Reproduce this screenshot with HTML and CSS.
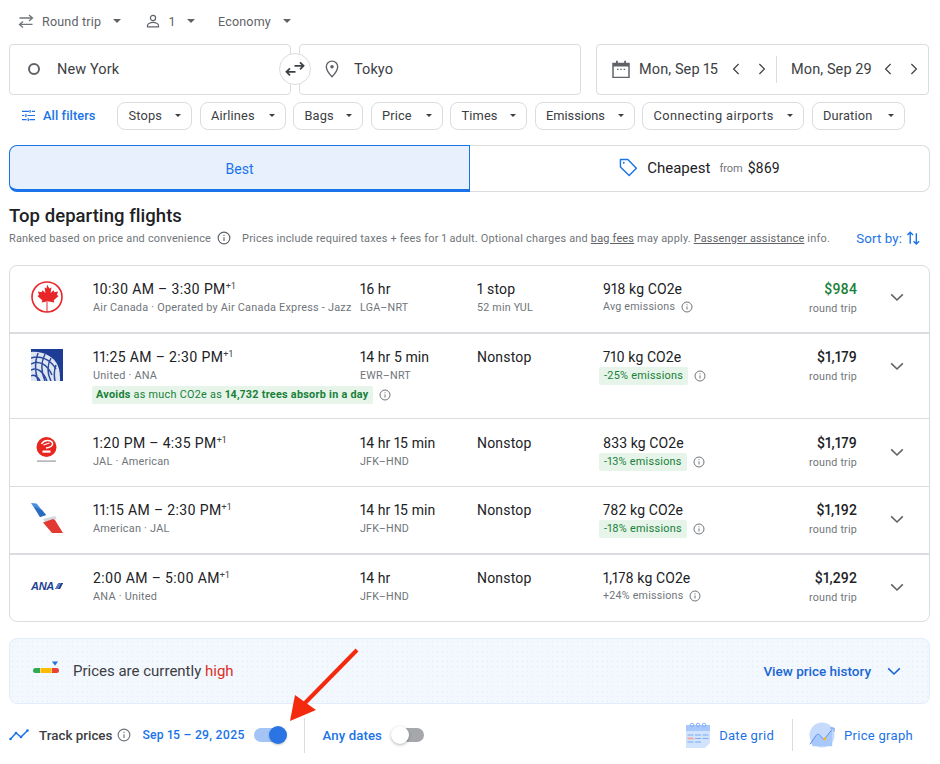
FILE: index.html
```html
<!DOCTYPE html>
<html lang="en">
<head>
<meta charset="utf-8">
<title>Flights</title>
<link rel="stylesheet" href="styles.css">
</head>
<body>
<svg class="defs" width="0" height="0" aria-hidden="true">
  <symbol id="info" viewBox="0 0 12 12"><circle cx="6" cy="6" r="5" fill="none" stroke="currentColor" stroke-width="1"/><path d="M6 5.400v3.100M6 3.300v1" stroke="currentColor" stroke-width="1" fill="none"/></symbol>
  <symbol id="chev" viewBox="0 0 14 9"><path d="M1.200 1.400 7 7l5.800-5.600" fill="none" stroke="currentColor" stroke-width="1.600"/></symbol>
  <symbol id="left" viewBox="0 0 8 12"><path d="M6.600 1 1.600 6l5 5" fill="none" stroke="currentColor" stroke-width="1.200"/></symbol>
  <symbol id="right" viewBox="0 0 8 12"><path d="M1.400 1l5 5-5 5" fill="none" stroke="currentColor" stroke-width="1.200"/></symbol>
</svg>

<div class="page">
  <div class="trip">
    <div class="trip-item trip-round">
      <svg class="ic16" viewBox="0 0 16 14"><path d="M11 1l3.500 3L11 7M14.500 4H1.500M5 7.400l-3.500 3L5 13.400M1.500 10.400h13" fill="none" stroke="#70757a" stroke-width="1.300"/></svg>
      <span>Round trip</span><i class="caret"></i>
    </div>
    <div class="trip-item trip-pax">
      <svg class="ic16" viewBox="0 0 14 14"><circle cx="7" cy="4" r="2.600" fill="none" stroke="#5f6368" stroke-width="1.200"/><path d="M1.500 12.800v-1.500c0-1.700 3-3 5.500-3s5.500 1.300 5.500 3v1.500z" fill="none" stroke="#5f6368" stroke-width="1.200"/></svg>
      <span>1</span><i class="caret"></i>
    </div>
    <div class="trip-item trip-class"><span>Economy</span><i class="caret"></i></div>
  </div>

  <div class="search">
    <div class="places">
      <div class="field field-from"><i class="ring"></i><span>New York</span></div>
      <div class="field field-to">
        <svg class="pin" viewBox="0 0 14 18"><path d="M7 1.100a5.700 5.700 0 0 0-5.700 5.700c0 4 5.700 10 5.700 10s5.700-6 5.700-10A5.700 5.700 0 0 0 7 1.100z" fill="none" stroke="#5f6368" stroke-width="1.400"/><circle cx="7" cy="6.800" r="1.800" fill="#5f6368"/></svg>
        <span>Tokyo</span>
      </div>
      <div class="swap">
        <svg viewBox="0 0 20 16" width="20" height="16"><path d="M9.500 4.800h9M15 1.300l3.600 3.500-3.600 3.500" fill="none" stroke="#3c4043" stroke-width="1.700"/><path d="M10.500 10.800h-9M5 7.300l-3.600 3.500L5 14.300" fill="none" stroke="#3c4043" stroke-width="1.700"/></svg>
      </div>
    </div>
    <div class="dates">
      <svg class="cal" viewBox="0 0 18 18"><path d="M1 3.500h16V17.500H1z" fill="none" stroke="#5f6368" stroke-width="1.500"/><path d="M1 3h16v3.500H1zM4 .8h1.800V3H4zM12.200.8H14V3h-1.800z" fill="#5f6368"/><path d="M5 9.300h1.500M8.300 9.300h1.500M11.600 9.300h1.500" stroke="#5f6368" stroke-width="1.200"/></svg>
      <span class="date">Mon, Sep 15</span>
      <svg class="nav nav-l"><use href="#left"/></svg>
      <svg class="nav nav-r"><use href="#right"/></svg>
      <i class="date-sep"></i>
      <span class="date">Mon, Sep 29</span>
      <svg class="nav nav-l"><use href="#left"/></svg>
      <svg class="nav nav-r"><use href="#right"/></svg>
    </div>
  </div>

  <div class="filters">
    <div class="all-filters">
      <svg viewBox="0 0 14 14" width="13" height="13"><path d="M0 2.500h7.500M10.500 2.500H14M0 7h2.500M6 7h8M0 11.500h5M8 11.500h6M8.700 1v3M4.200 5.500v3M6.700 10v3" fill="none" stroke="#1a73e8" stroke-width="1.300"/></svg>
      <span>All filters</span>
    </div>
    <div class="chip chip-stops">Stops<i class="caret"></i></div>
    <div class="chip chip-airlines">Airlines<i class="caret"></i></div>
    <div class="chip chip-bags">Bags<i class="caret"></i></div>
    <div class="chip chip-price">Price<i class="caret"></i></div>
    <div class="chip chip-times">Times<i class="caret"></i></div>
    <div class="chip chip-emissions">Emissions<i class="caret"></i></div>
    <div class="chip chip-connecting">Connecting airports<i class="caret"></i></div>
    <div class="chip chip-duration">Duration<i class="caret"></i></div>
  </div>

  <div class="tabs">
    <div class="tab tab-best">Best</div>
    <div class="tab tab-cheap">
      <svg class="tag" viewBox="0 0 20 20" width="19" height="19"><path d="M1.500 1.500h7.800l9 9.200-7.600 7.800-9.200-9z" fill="none" stroke="#1a73e8" stroke-width="1.500" stroke-linejoin="round"/><circle cx="5" cy="5" r="1" fill="#1a73e8"/></svg>
      <span class="cheap-label">Cheapest</span><span class="cheap-from">from</span><span class="cheap-price">$869</span>
    </div>
  </div>

  <h2 class="title">Top departing flights</h2>
  <div class="meta">
    <p class="meta-text">Ranked based on price and convenience<svg class="info info-meta"><use href="#info"/></svg><span class="meta-gap">Prices include required taxes + fees for 1 adult. Optional charges and <u>bag fees</u> may apply. <u>Passenger assistance</u> info.</span></p>
    <div class="sort">Sort by:<svg viewBox="0 0 16 16" width="15" height="16"><path d="M4.500 14V2M1.500 4.800 4.500 1.800l3 3" fill="none" stroke="#1a73e8" stroke-width="1.500"/><path d="M11 3v11.500M8 11.400l3 3 3-3" fill="none" stroke="#1a73e8" stroke-width="1.500"/></svg></div>
  </div>

  <div class="list">
    <div class="row row-a">
      <div class="logo">
        <svg viewBox="0 0 32 32" width="32" height="32"><circle cx="16" cy="16" r="15" fill="none" stroke="#e8262a" stroke-width="1.600"/><path d="M16 3.500l2.400 4 2-1-.8 5.500 2.900-2.800 1 2 3.600-.7-1.200 3.600 1.800 1-5 4.200.7 2.100-5.400-.9h-2l-5.400.9.700-2.100-5-4.200 1.800-1-1.200-3.600 3.600.7 1-2 2.900 2.800-.8-5.500 2 1z" fill="#e8262a"/><path d="M16 21v10" stroke="#e8262a" stroke-width="1"/></svg>
      </div>
      <div class="col-time"><div class="main">10:30 AM – 3:30 PM<sup>+1</sup></div><div class="sub">Air Canada · Operated by Air Canada Express - Jazz</div></div>
      <div class="col-dur"><div class="main">16 hr</div><div class="sub">LGA–NRT</div></div>
      <div class="col-stop"><div class="main">1 stop</div><div class="sub">52 min YUL</div></div>
      <div class="col-em"><div class="main">918 kg CO2e</div><div class="sub em-plain">Avg emissions<svg class="info"><use href="#info"/></svg></div></div>
      <div class="col-price"><div class="price price-low">$984</div><div class="sub">round trip</div></div>
      <svg class="expand"><use href="#chev"/></svg>
    </div>

    <div class="row row-b">
      <div class="logo">
        <svg viewBox="0 0 32 32" width="32" height="32"><rect width="32" height="32" fill="#1d3c94"/><path d="M0 3C11 2 23 7 27 17c2 5 2 10 2 15H0z" fill="#dfe6f2"/><g stroke="#2a4a9e" stroke-width="1.500" fill="none"><path d="M0 9C9 6 19 10 25 20M0 15C8 11 16 15 21 26M0 21C6 18 12 22 16 32M0 27C3 25 7 28 9 32M7 4C4 12 4 23 7 32M14 5C10 13 10 23 14 32M20 9C16 16 16 25 20 32M25 16C23 21 23 27 24 32"/></g></svg>
      </div>
      <div class="col-time"><div class="main">11:25 AM – 2:30 PM<sup>+1</sup></div><div class="sub">United · ANA</div>
        <div class="avoid"><span class="pill pill-avoid"><b>Avoids</b> as much CO2e as <b>14,732 trees absorb in a day</b></span><svg class="info"><use href="#info"/></svg></div>
      </div>
      <div class="col-dur"><div class="main">14 hr 5 min</div><div class="sub">EWR–NRT</div></div>
      <div class="col-stop"><div class="main">Nonstop</div></div>
      <div class="col-em"><div class="main">710 kg CO2e</div><div class="em-line"><span class="pill">-25% emissions</span><svg class="info"><use href="#info"/></svg></div></div>
      <div class="col-price"><div class="price">$1,179</div><div class="sub">round trip</div></div>
      <svg class="expand"><use href="#chev"/></svg>
    </div>

    <div class="row row-c">
      <div class="logo">
        <svg viewBox="0 0 32 32" width="32" height="32"><circle cx="15.500" cy="12" r="10" fill="#e8261f"/><path d="M10.500 9C13 4.500 20 4.500 21.500 8c.8 2.500-2 4.500-6.500 5" fill="none" stroke="#fff" stroke-width="1.500"/><path d="M12.500 10l6-2" stroke="#fff" stroke-width="1.200"/><rect x="11.500" y="15.500" width="8" height="2.200" fill="#fff"/><rect x="6" y="25.500" width="19" height="1.200" fill="#9a9a9a"/></svg>
      </div>
      <div class="col-time"><div class="main">1:20 PM – 4:35 PM<sup>+1</sup></div><div class="sub">JAL · American</div></div>
      <div class="col-dur"><div class="main">14 hr 15 min</div><div class="sub">JFK–HND</div></div>
      <div class="col-stop"><div class="main">Nonstop</div></div>
      <div class="col-em"><div class="main">833 kg CO2e</div><div class="em-line"><span class="pill">-13% emissions</span><svg class="info"><use href="#info"/></svg></div></div>
      <div class="col-price"><div class="price">$1,179</div><div class="sub">round trip</div></div>
      <svg class="expand"><use href="#chev"/></svg>
    </div>

    <div class="row row-d">
      <div class="logo">
        <svg viewBox="0 0 32 32" width="32" height="32"><path d="M0 1l5.500.5L15 13l-6 2z" fill="#4b8fe0"/><path d="M3 4.500 9 15l6-2-4-5z" fill="#2c6bc0"/><path d="M12 17l12-3 2 3-12 3z" fill="#d5d8dc"/><path d="M12 20.500l10-3.500 2 1 8 13H21z" fill="#e23a33"/></svg>
      </div>
      <div class="col-time"><div class="main">11:15 AM – 2:30 PM<sup>+1</sup></div><div class="sub">American · JAL</div></div>
      <div class="col-dur"><div class="main">14 hr 15 min</div><div class="sub">JFK–HND</div></div>
      <div class="col-stop"><div class="main">Nonstop</div></div>
      <div class="col-em"><div class="main">782 kg CO2e</div><div class="em-line"><span class="pill">-18% emissions</span><svg class="info"><use href="#info"/></svg></div></div>
      <div class="col-price"><div class="price">$1,192</div><div class="sub">round trip</div></div>
      <svg class="expand"><use href="#chev"/></svg>
    </div>

    <div class="row row-e">
      <div class="logo logo-ana">
        <span class="ana">ANA</span><svg viewBox="0 0 11 8" width="11" height="8"><path d="M4.500 0H11L7 8H0z" fill="#1d3f94"/><path d="M5.500 0 1.500 8M7.500 0l-4 8" stroke="#fff" stroke-width=".6"/></svg>
      </div>
      <div class="col-time"><div class="main">2:00 AM – 5:00 AM<sup>+1</sup></div><div class="sub">ANA · United</div></div>
      <div class="col-dur"><div class="main">14 hr</div><div class="sub">JFK–HND</div></div>
      <div class="col-stop"><div class="main">Nonstop</div></div>
      <div class="col-em"><div class="main">1,178 kg CO2e</div><div class="sub em-plain">+24% emissions<svg class="info"><use href="#info"/></svg></div></div>
      <div class="col-price"><div class="price">$1,292</div><div class="sub">round trip</div></div>
      <svg class="expand"><use href="#chev"/></svg>
    </div>
  </div>

  <div class="insight">
    <svg class="meter" viewBox="0 0 26 16" width="26" height="16"><path d="M7 7H2.500a2.500 2.500 0 0 0 0 5H7z" fill="#34a853"/><rect x="7.500" y="7" width="11" height="5" fill="#fbbc04"/><path d="M19 7h4.500a2.500 2.500 0 0 1 0 5H19z" fill="#ea4335"/><path d="M19 .6h6l-3 4.200z" fill="#1a73e8"/></svg>
    <span class="insight-text">Prices are currently <em>high</em></span>
    <span class="insight-link">View price history</span>
    <svg class="insight-chev"><use href="#chev"/></svg>
  </div>

  <div class="track">
    <svg viewBox="0 0 20 12" width="20" height="12"><path d="M1.500 10 7 4l5 4 6.500-6.500" fill="none" stroke="#1a73e8" stroke-width="1.500"/><circle cx="1.500" cy="10" r="1.300" fill="#1a73e8"/><circle cx="7" cy="4" r="1.300" fill="#1a73e8"/><circle cx="12" cy="8" r="1.300" fill="#1a73e8"/><circle cx="18.500" cy="1.500" r="1.300" fill="#1a73e8"/></svg>
    <span class="track-label">Track prices</span>
    <svg class="info info-track"><use href="#info"/></svg>
    <span class="track-dates">Sep 15 – 29, 2025</span>
    <span class="toggle toggle-on"><i></i></span>
    <i class="vsep"></i>
    <span class="track-any">Any dates</span>
    <span class="toggle toggle-off"><i></i></span>
    <div class="track-tools">
      <svg class="tool-ic" viewBox="0 0 24 26" width="24" height="26"><path d="M0 3h24v18l-5 5H0z" fill="#d2e3fc"/><rect y="3" width="24" height="6" fill="#a8c7fa"/><g fill="none" stroke="#8ab4f8" stroke-width="1"><circle cx="6" cy="3" r="1.800"/><circle cx="12" cy="3" r="1.800"/><circle cx="18" cy="3" r="1.800"/></g><path d="M1.500 13h6M9 13h6M16.500 13h6M9 16.500h6M16.500 16.500h6M1.500 20h6M9 20h6" stroke="#7baaf7" stroke-width="1.200"/><path d="M1.500 16.500h6" stroke="#f4a6a0" stroke-width="2"/></svg>
      <span class="tool">Date grid</span>
      <i class="vsep vsep-tool"></i>
      <svg class="tool-ic tool-graph" viewBox="0 0 28 28"><circle cx="14" cy="14" r="13.500" fill="#c6dafc"/><path d="M2 22l7-8 3 1 4 5 9-11v17H4z" fill="#a8c7fa"/><path d="M1 24l7-10c2-2 4 0 5 2l3 3 9-11" fill="none" stroke="#4a86e8" stroke-width="1"/><path d="M23 6.500h4v4" fill="none" stroke="#4a86e8" stroke-width="1"/><circle cx="17" cy="18" r="1.600" fill="#fbbc04"/></svg>
      <span class="tool">Price graph</span>
    </div>
  </div>

  <svg class="arrow" viewBox="0 0 72 76" width="72" height="76"><path d="M69 2 17 55" stroke="#f42a0e" stroke-width="4" fill="none"/><path d="M2 73 7 47 28 62z" fill="#f42a0e"/></svg>
</div>
</body>
</html>
```
FILE: styles.css
```css
* { box-sizing: border-box; }
html, body { margin: 0; padding: 0; background: #fff; }
body { font-family: Roboto, "Liberation Sans", sans-serif; color: #202124; font-variant-numeric: proportional-nums; }
.defs { position: absolute; }
.page { position: relative; width: 940px; height: 764px; overflow: hidden; padding: 0 10px 0 9px; }

.trip { display: flex; align-items: center; height: 44px; padding: 0 0 2px 9px; color: #5f6368; font-size: 12.500px; letter-spacing: .2px; }
.trip-item { display: flex; align-items: center; }
.trip-round { width: 127px; }
.trip-round span { margin-left: 8px; }
.trip-pax { width: 73px; }
.trip-pax span { margin-left: 8px; }
.ic16 { width: 16px; height: 14px; }
.caret { display: inline-block; width: 0; height: 0; border-left: 4px solid transparent; border-right: 4px solid transparent; border-top: 4px solid #5f6368; margin-left: 12px; }

.search { display: flex; justify-content: space-between; height: 51px; padding-right: 1px; }
.places { position: relative; display: flex; gap: 8px; width: 572px; }
.field { display: flex; align-items: center; width: 282px; height: 51px; padding-bottom: 1px; border: 1px solid #dadce0; border-radius: 4px; font-size: 14.500px; color: #3c4043; letter-spacing: .1px; }
.field-from { padding-left: 18px; }
.field-from span { margin-left: 17px; }
.field-to { padding-left: 25px; }
.field-to span { margin-left: 15px; }
.ring { width: 12px; height: 12px; border: 2.500px solid #5f6368; border-radius: 50%; }
.pin { width: 14px; height: 18px; }
.swap { position: absolute; left: 270px; top: 9px; width: 32px; height: 32px; border: 1px solid #dadce0; border-radius: 50%; background: #fff; display: flex; align-items: center; justify-content: center; }
.dates { display: flex; align-items: center; width: 333px; height: 51px; padding: 0 0 1px 15px; border: 1px solid #dadce0; border-radius: 4px; font-size: 14.500px; color: #3c4043; letter-spacing: .1px; }
.cal { width: 18px; height: 18px; margin-right: 9px; }
.date { width: 81px; white-space: nowrap; }
.nav { width: 8px; height: 12px; color: #3c4043; flex: none; }
.nav-l { margin-left: 12px; }
.nav-r { margin-left: 18px; }
.date-sep { width: 1px; height: 27px; background: #dadce0; margin: 0 14px 0 10px; }

.filters { display: flex; align-items: center; height: 28px; margin-top: 7px; font-size: 12.800px; color: #3c4043; letter-spacing: .15px; }
.all-filters { display: flex; align-items: center; width: 108px; padding: 0 0 2px 13px; color: #1a73e8; font-weight: 500; letter-spacing: .1px; }
.all-filters span { margin-left: 8px; }
.chip { display: flex; align-items: center; justify-content: space-between; flex: none; height: 28px; margin-right: 7.500px; padding: 0 10px 2px 10.500px; border: 1px solid #dadce0; border-radius: 8px; white-space: nowrap; }
.chip .caret { border-left-width: 3.500px; border-right-width: 3.500px; border-top-width: 3.500px; border-top-color: #3c4043; }
.chip-stops { width: 75px; }
.chip-airlines { width: 86px; }
.chip-bags { width: 70px; }
.chip-price { width: 72px; }
.chip-times { width: 77px; }
.chip-emissions { width: 100px; letter-spacing: 0; }
.chip-connecting { width: 162px; letter-spacing: .42px; }
.chip-duration { width: 93px; }

.tabs { display: flex; height: 47px; margin-top: 15px; }
.tab { display: flex; align-items: center; justify-content: center; }
.tab-best { flex: 0 0 461px; padding-top: 2px; background: #e8f0fe; border: 1px solid #1a73e8; border-bottom-width: 3px; border-radius: 8px 0 0 8px; color: #1a73e8; font-size: 14px; }
.tab-cheap { flex: 1; padding-bottom: 2px; border: 1px solid #dadce0; border-left: 0; border-radius: 0 8px 8px 0; }
.tag { margin-right: 9px; }
.cheap-label { font-size: 15px; }
.cheap-from { font-size: 11px; color: #70757a; margin: 1px 5px 0 9px; }
.cheap-price { font-size: 14px; }

.title { margin: 14px 0 0; font-size: 18.500px; line-height: 21px; font-weight: 500; color: #202124; letter-spacing: .05px; }
.meta { display: flex; justify-content: space-between; align-items: center; height: 22px; }
.meta-text { margin: 0; font-size: 10.930px; color: #70757a; letter-spacing: .2px; white-space: nowrap; display: flex; align-items: center; }
.meta-gap { margin-left: 11px; }
.meta-gap u { color: #5f6368; }
.info { width: 12px; height: 12px; color: #70757a; flex: none; margin-left: 6px; }
.info-meta { width: 14px; height: 14px; color: #5f6368; }
.sort { display: flex; align-items: center; gap: 4px; margin-right: 9px; color: #1a73e8; font-size: 13.300px; letter-spacing: .1px; }

.list { margin-top: 16px; border: 1px solid #dadce0; border-radius: 8px; }
.row { display: grid; grid-template-columns: 62px 267px 117px 126px 168px 86px; position: relative; padding: 13px 0 0 21px; align-items: start; border-bottom: 2px solid #dadce0; }
.row-a { height: 68px; }
.row-b { height: 85px; border-bottom-width: 1px; }
.row-c { height: 68px; padding-top: 14px; border-bottom-width: 1px; }
.row-d { height: 68px; }
.row-e { height: 66px; border-bottom: 0; }
.logo { width: 32px; height: 32px; margin-top: 2px; }
.logo-ana { display: flex; align-items: center; gap: 1px; }
.ana { font-family: "Liberation Sans", sans-serif; font-style: italic; font-weight: 700; font-size: 11px; color: #1d3f94; letter-spacing: -.3px; }
.main { font-size: 14px; line-height: 21px; color: #202124; letter-spacing: .1px; white-space: nowrap; }
.main sup { font-size: 9px; line-height: 0; vertical-align: 5px; color: #3c4043; }
.col-time .main { letter-spacing: .35px; }
.col-dur .main { letter-spacing: .1px; }
.col-stop .main { letter-spacing: .2px; }
.sub { font-size: 10.700px; line-height: 16px; color: #70757a; letter-spacing: .22px; white-space: nowrap; }
.col-time .sub { font-size: 10.900px; }
.em-plain { display: flex; align-items: center; margin-top: -1px; }
.em-line { display: flex; align-items: center; margin: -1px 0 0 -4px; }
.pill { display: inline-block; height: 18px; line-height: 18px; padding: 0 5px; background: #e6f4ea; border-radius: 2px; color: #188038; font-size: 10.900px; letter-spacing: .25px; white-space: nowrap; }
.pill + .info { margin-left: 6px; }
.avoid { display: flex; align-items: center; margin-top: 2px; margin-left: -1px; }
.pill-avoid { padding: 0 4px; font-size: 10.800px; letter-spacing: .28px; }
.pill-avoid b { font-weight: 700; }
.col-price { text-align: right; }
.price { font-size: 14px; line-height: 20px; font-weight: 500; color: #202124; letter-spacing: .1px; }
.price-low { color: #188038; }
.col-price .sub { margin-top: 2px; }
.expand { position: absolute; left: 880px; top: 28px; width: 14px; height: 9px; color: #5f6368; }
.row-a .expand { top: 27px; }
.row-c .expand { top: 29px; }

.insight { display: flex; align-items: center; height: 66px; margin-top: 16px; padding: 0 28px 0 23px; background-color: #f3f7fe; background-image: radial-gradient(#e2eaf9 .6px, transparent .7px); background-size: 5px 5px; border: 1px solid #e3ecfb; border-radius: 8px; }
.meter { flex: none; margin-top: -5px; }
.insight-text { margin-left: 14px; font-size: 15px; color: #3c4043; }
.insight-text em { font-style: normal; color: #d93025; }
.insight-link { margin-left: auto; color: #1967d2; font-size: 13.500px; font-weight: 500; }
.insight-chev { width: 14px; height: 9px; margin-left: 16px; color: #1967d2; }

.track { display: flex; align-items: center; height: 50px; padding-top: 12px; font-size: 13px; }
.track-label { margin-left: 10px; font-size: 13.400px; font-weight: 500; color: #3c4043; }
.info-track { width: 14px; height: 14px; margin-left: 5px; }
.track-dates { margin-left: 11px; color: #1a73e8; font-weight: 500; font-size: 12.200px; letter-spacing: .25px; white-space: nowrap; }
.toggle { position: relative; display: inline-block; flex: none; width: 32px; height: 14px; border-radius: 7px; }
.toggle i { position: absolute; top: -2px; width: 18px; height: 18px; border-radius: 50%; }
.toggle-on { margin-left: 9px; background: #a3c4f5; }
.toggle-on i { right: -1px; background: #2b74e4; box-shadow: 0 1px 2px rgba(60,64,67,.3); }
.toggle-off { margin-left: 10px; background: #a5a7aa; }
.toggle-off i { left: -1px; background: #fff; box-shadow: 0 1px 3px rgba(60,64,67,.4); }
.vsep { width: 1px; height: 35px; background: #dadce0; margin: 0 18px; flex: none; }
.track-any { color: #1a73e8; font-weight: 500; font-size: 13.200px; letter-spacing: .1px; }
.track-tools { display: flex; align-items: center; margin-left: auto; margin-right: 17px; }
.tool { color: #1a73e8; font-size: 13px; margin-left: 9px; letter-spacing: .3px; }
.tool-ic { flex: none; }
.tool-graph { width: 26px; height: 26px; }
.vsep-tool { height: 32px; margin: 0 16px 0 18px; }

.arrow { position: absolute; left: 288px; top: 648px; }
```
